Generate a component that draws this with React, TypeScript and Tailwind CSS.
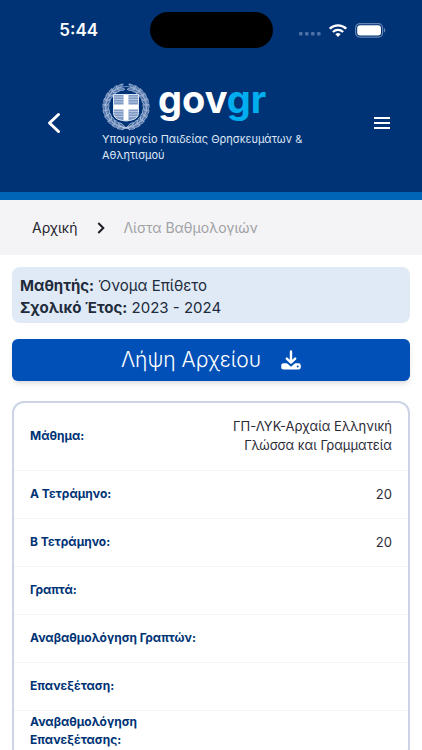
interface GradeRow {
  label: string;
  value?: string;
  size?: "tall" | "wrapped";
}

const rows: GradeRow[] = [
  { label: "Μάθημα:", value: "ΓΠ-ΛΥΚ-Αρχαία Ελληνική Γλώσσα και Γραμματεία", size: "tall" },
  { label: "Α Τετράμηνο:", value: "20" },
  { label: "Β Τετράμηνο:", value: "20" },
  { label: "Γραπτά:" },
  { label: "Αναβαθμολόγηση Γραπτών:" },
  { label: "Επανεξέταση:" },
  { label: "Αναβαθμολόγηση Επανεξέτασης:", size: "wrapped" },
];

// leaf positions along each half of the wreath, in degrees from the bottom
const leafAngles = [12, 27, 42, 57, 72, 87, 102, 117, 132, 147, 162];

function Emblem() {
  return (
    <svg viewBox="0 0 48 48" className="size-12 shrink-0" fill="none" aria-hidden="true">
      {[1, -1].map((side) => (
        <g key={side} transform={side === 1 ? undefined : "translate(48 0) scale(-1 1)"}>
          <path d="M24 44.500A20.500 20.500 0 0 0 24 3.500" stroke="#6f8fbf" strokeWidth="1" />
          {leafAngles.map((a) => (
            <g key={a} transform={`rotate(${-a} 24 24) translate(24 44.500)`} fill="#4a6ea6" stroke="#b3c5e1" strokeWidth="0.700">
              <path d="M-3 .2C-1 2.600 2.200 3 4.400 2.200C3 .6 .2 -.8 -3 .2Z" />
              <path d="M-3 -.4C-1 -3.200 2 -4.200 4.400 -3.400C3.200 -1.200 .6 0 -3 -.4Z" />
            </g>
          ))}
        </g>
      ))}
      <path d="M18 43l6 2.500 6-2.500M20 47l4-3 4 3" stroke="#b9cae4" strokeWidth="1" />
      <path d="M11.500 11.500h25v18c0 5-3 7.500-12.500 8.500c-9.500-1-12.500-3.500-12.500-8.500z" fill="#7f9ac4" stroke="#dbe5f3" strokeWidth="1" />
      <path
        d="M12 14h9M12 16.500h9M12 19h9M27 14h9M27 16.500h9M27 19h9M12 28.500h9M12 31h9M13 33.500h8M27 28.500h9M27 31h9M27 33.500h8"
        stroke="#c5d3e8"
        strokeWidth="0.800"
      />
      <path d="M21.500 12h5v9.500H36v5h-9.500V37.500h-5V26.500H12v-5h9.500z" fill="#fff" />
    </svg>
  );
}

function StatusBar() {
  return (
    <div className="grid grid-cols-[1fr_auto_1fr] items-center pt-3">
      <span className="pl-2 text-center text-[17px] font-semibold leading-5">5:44</span>
      <div className="h-9 w-[123px] rounded-full bg-black" />
      <div className="flex items-center justify-end gap-2 pr-9">
        <svg viewBox="0 0 22 4" className="mt-2 h-1 w-[22px]" fill="#4c70a5" aria-hidden="true">
          <rect x="0" width="3.600" height="3.600" rx="1" />
          <rect x="6" width="3.600" height="3.600" rx="1" />
          <rect x="12" width="3.600" height="3.600" rx="1" />
          <rect x="18" width="3.600" height="3.600" rx="1" />
        </svg>
        <svg viewBox="0 0 18 13" className="h-[13px] w-[18px]" fill="none" stroke="#fff" strokeWidth="2.400" aria-hidden="true">
          <path d="M.8 4.700a11.700 11.700 0 0 1 16.400 0" />
          <path d="M3.900 8a7.300 7.300 0 0 1 10.200 0" />
          <path d="M9 13L6.400 10.300a3.800 3.800 0 0 1 5.200 0z" fill="#fff" stroke="none" />
        </svg>
        <svg viewBox="0 0 31 15" className="h-[15px] w-[31px]" aria-hidden="true">
          <rect x=".6" y=".6" width="27" height="13.500" rx="4.300" fill="none" stroke="#6584b3" strokeWidth="1.200" />
          <rect x="2.200" y="2.200" width="23.800" height="10.300" rx="3" fill="#fff" />
          <path d="M29 5v4.600c1.800-.7 1.800-3.900 0-4.600z" fill="#6584b3" />
        </svg>
      </div>
    </div>
  );
}

function Header() {
  return (
    <header className="border-b-8 border-[#0064b7] bg-[#003375] pb-[29px] text-white">
      <StatusBar />
      <div className="flex items-center pl-10 pr-6 pt-[35px]">
        <button type="button" aria-label="Πίσω" className="flex h-8 w-7 items-center justify-center">
          <svg viewBox="0 0 14 22" className="h-[22px] w-3.5" fill="none" stroke="#fff" strokeWidth="3" strokeLinecap="round" strokeLinejoin="round">
            <path d="M11.500 2.500L2.500 11l9 8.500" />
          </svg>
        </button>
        <div className="flex-1 pl-[34px]">
          <div className="flex items-start gap-2">
            <Emblem />
            <p className="text-[38px] font-bold leading-8">
              gov<span className="text-[#00aeef]">gr</span>
            </p>
          </div>
          <p className="max-w-[216px] text-[11px] leading-4 text-[#dfe8f5]">Υπουργείο Παιδείας Θρησκευμάτων &amp; Αθλητισμού</p>
        </div>
        <button type="button" aria-label="Μενού" className="flex size-8 items-center justify-center">
          <svg viewBox="0 0 16 12" className="h-3 w-4" fill="#fff">
            <path d="M0 0h16v2H0zM0 5h16v2H0zM0 10h16v2H0z" />
          </svg>
        </button>
      </div>
    </header>
  );
}

function Breadcrumb() {
  return (
    <nav className="flex items-center bg-[#f4f4f6] px-8 py-4 text-[14px] leading-[23px]">
      <a href="#home" className="text-[#26262e]">Αρχική</a>
      <svg viewBox="0 0 8 12" className="ml-5 mr-[18px] h-3 w-2" fill="none" stroke="#1d1d26" strokeWidth="2" aria-hidden="true">
        <path d="M1.300 1l5 5-5 5" />
      </svg>
      <span className="text-[#a1a1a6]">Λίστα Βαθμολογιών</span>
    </nav>
  );
}

function DownloadIcon() {
  return (
    <svg viewBox="0 0 20 20" className="size-5" fill="none" aria-hidden="true">
      <path d="M2.500 13.300h15a2.300 2.300 0 0 1 2.300 2.300v1.600a2.300 2.300 0 0 1-2.300 2.300h-15A2.300 2.300 0 0 1 .2 17.200v-1.600a2.300 2.300 0 0 1 2.300-2.300z" fill="#fff" />
      <path d="M4.800 12.200L10 16.800l5.200-4.600z" fill="#0050b8" />
      <path d="M10 1.500v10.500M5.800 8.600l4.200 4 4.200-4" stroke="#fff" strokeWidth="2.400" strokeLinecap="round" strokeLinejoin="round" />
      <circle cx="16.700" cy="16.500" r="1" fill="#0050b8" />
    </svg>
  );
}

function GradeTable() {
  return (
    <div className="overflow-hidden rounded-xl border-2 border-[#ccd4e5]">
      <table className="w-full">
        <tbody className="divide-y divide-[#f3f4f6]">
          {rows.map((row) => (
            <tr key={row.label} className={row.size === "tall" ? "h-[67px]" : "h-12"}>
              <th
                scope="row"
                className={`w-1/2 pl-4 text-left text-[12px] font-bold leading-[18px] text-[#003375] ${
                  row.size === "wrapped" ? "pt-0.5 align-top" : ""
                }`}
              >
                {row.label}
              </th>
              <td className="pr-4 text-right text-[13px] leading-[19px] text-[#2b2b38]">{row.value}</td>
            </tr>
          ))}
        </tbody>
      </table>
    </div>
  );
}

export default function App() {
  return (
    <div className="flex h-screen flex-col overflow-hidden bg-white font-['Inter','Noto_Sans',sans-serif]">
      <Header />
      <Breadcrumb />
      <main className="min-h-0 flex-1 overflow-y-auto px-3 pt-3 [scrollbar-width:none]">
        <section className="rounded-lg bg-[#e0eaf6] px-2 pb-1 pt-2 text-[15px] leading-[22px] text-[#212b3b]">
          <p><strong>Μαθητής:</strong> Όνομα Επίθετο</p>
          <p><strong>Σχολικό Έτος:</strong> 2023 - 2024</p>
        </section>
        <button
          type="button"
          className="mb-5 mt-4 flex h-[42px] w-full items-center justify-center gap-5 rounded-md bg-[#0050b8] text-[21px] font-light text-white shadow-md"
        >
          Λήψη Αρχείου
          <DownloadIcon />
        </button>
        <GradeTable />
      </main>
    </div>
  );
}
